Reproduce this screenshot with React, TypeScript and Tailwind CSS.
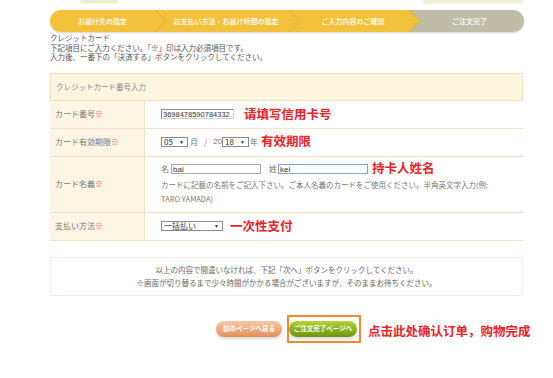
const jp = "font-['Noto_Sans_CJK_JP','Liberation_Sans',sans-serif]";
const cn = "font-['Noto_Sans_CJK_SC','Liberation_Sans',sans-serif]";

const steps = [
  { label: "お届け先の指定", w: "w-[105px]", bg: "bg-[#f3c23d]", fill: "#f3c23d", z: "z-30" },
  { label: "お支払い方法・お届け時間の指定", w: "w-[134px]", bg: "bg-[#f3c23d]", fill: "#f3c23d", z: "z-20" },
  { label: "ご入力内容のご確認", w: "w-[120px]", bg: "bg-[#f3c23d]", fill: "#f3c23d", z: "z-10" },
  { label: "ご注文完了", w: "flex-1", bg: "bg-[#c0bda6]", fill: "", z: "z-0" },
];

const Req = () => <span className="text-[#ef5a5a]">※</span>;

const Note = ({ children }: { children: React.ReactNode }) => (
  <span className={`${cn} text-[12.5px] font-bold text-[#e8232a] leading-none`}>{children}</span>
);

const FakeSelect = ({ value, w }: { value: string; w: string }) => (
  <span
    className={`${w} h-[10px] border border-[#8a8a8a] bg-white flex items-center justify-between pl-[2px] pr-[3px] text-[8px] text-[#333] leading-none font-['Liberation_Sans',sans-serif]`}
  >
    <span className={jp}>{value}</span>
    <span className="text-[5px]">▼</span>
  </span>
);

const StepBar = () => (
  <div className="ml-[50px] w-[474px] h-[22px] rounded-full overflow-hidden flex shadow-[0_1px_2px_rgba(0,0,0,0.18)]">
    {steps.map((s, i) => (
      <div key={i} className={`relative ${s.w} ${s.bg} ${s.z} flex items-center justify-center`}>
        <span className={`${jp} text-[7px] text-white font-medium leading-none ${i === 3 ? "pl-[6px]" : i > 0 ? "pl-[8px]" : ""}`}>
          {s.label}
        </span>
        {s.fill && (
          <svg className="absolute -right-[11px] top-0" width="11" height="22" viewBox="0 0 11 22">
            <polygon points="0,0 11,11 0,22" fill={s.fill} />
            <polyline points="0,0 11,11 0,22" fill="none" stroke="#dcaa2c" strokeWidth="1" />
          </svg>
        )}
      </div>
    ))}
  </div>
);

export default function App() {
  return (
    <div className={`w-[553px] h-[378px] bg-white overflow-hidden ${jp} text-[#666]`}>
      <div className="h-[10px] flex items-start">
        <div className="ml-[80px] w-[38px] h-[3px] rounded-full bg-[#e6eab8] blur-[1px]" />
        <div className="ml-[305px] w-[100px] h-[3px] rounded-full bg-[#eaedc6] blur-[1px]" />
      </div>

      <StepBar />

      <div className="ml-[50px] mt-[1px] text-[7.5px] leading-[9.5px] text-[#555]">
        <div>クレジットカード</div>
        <div>下記項目にご入力ください。「※」印は入力必須項目です。</div>
        <div>入力後、一番下の「決済する」ボタンをクリックしてください。</div>
      </div>

      <div className="ml-[50px] w-[473px] mt-[11px]">
        <div className="h-[28px] bg-[#fdf6df] border border-[#efdfbf] flex items-center pl-[5px] text-[7.5px] text-[#888]">
          クレジットカード番号入力
        </div>

        <div className="grid grid-cols-[95px_1fr] h-[28px] border-b border-[#f1e4ca]">
          <div className="bg-[#fdf6e3] border-r border-[#f1e2c4] flex items-center pl-[5px] text-[8px] text-[#777]">
            カード番号<Req />
          </div>
          <div className="flex items-center pl-[16px] gap-[10px]">
            <input
              readOnly
              value="3698478590784332"
              className="w-[73px] h-[10px] border border-[#8a8a8a] border-b-[#d0d0d0] border-r-[#d0d0d0] px-[1px] text-[7.5px] text-[#333] leading-none font-['Liberation_Sans',sans-serif] outline-none"
            />
            <Note>请填写信用卡号</Note>
          </div>
        </div>

        <div className="grid grid-cols-[95px_1fr] h-[28px] border-b border-[#f1e4ca]">
          <div className="bg-[#fdf6e3] border-r border-[#f1e2c4] flex items-center pl-[5px] text-[8px] text-[#777]">
            カード有効期限<Req />
          </div>
          <div className="flex items-center pl-[16px] text-[8px] text-[#777]">
            <FakeSelect value="05" w="w-[27px]" />
            <span className="ml-[2px]">月</span>
            <span className="ml-[6px]">/</span>
            <span className="ml-[6px] text-[8px] font-['Liberation_Sans',sans-serif]">20</span>
            <FakeSelect value="18" w="w-[27px]" />
            <span className="ml-[1px]">年</span>
            <span className="ml-[3px]">
              <Note>有效期限</Note>
            </span>
          </div>
        </div>

        <div className="grid grid-cols-[95px_1fr] h-[56px] border-b border-[#f1e4ca]">
          <div className="bg-[#fdf6e3] border-r border-[#f1e2c4] flex items-center pl-[5px] text-[8px] text-[#777]">
            カード名義<Req />
          </div>
          <div className="flex flex-col pl-[16px] pt-[7px] text-[8px] text-[#777]">
            <div className="flex items-center h-[11px]">
              <span>名</span>
              <input
                readOnly
                value="bai"
                className="ml-[2px] w-[90px] h-[10px] border border-[#a8a8a8] px-[1px] text-[8px] text-[#333] leading-none font-['Liberation_Sans',sans-serif] outline-none"
              />
              <span className="ml-[8px]">姓</span>
              <input
                readOnly
                value="kei"
                className="ml-[1px] w-[90px] h-[10px] border border-[#7da3de] px-[1px] text-[8px] text-[#333] leading-none font-['Liberation_Sans',sans-serif] outline-none"
              />
              <span className="ml-[4px]">
                <Note>持卡人姓名</Note>
              </span>
            </div>
            <div className="mt-[3px] leading-[14px] text-[7.5px] pr-[10px]">
              カードに記載の名前をご記入下さい。ご本人名義のカードをご使用ください。半角英文字入力(例:
              <br />
              TARO YAMADA)
            </div>
          </div>
        </div>

        <div className="grid grid-cols-[95px_1fr] h-[28px] border-b border-[#f1e4ca]">
          <div className="bg-[#fdf6e3] border-r border-[#f1e2c4] flex items-center pl-[5px] text-[8px] text-[#777]">
            支払い方法<Req />
          </div>
          <div className="flex items-center pl-[16px] gap-[7px]">
            <FakeSelect value="一括払い" w="w-[62px]" />
            <Note>一次性支付</Note>
          </div>
        </div>

        <div className="mt-[16px] h-[39px] border border-[#f4ede2] flex flex-col items-center justify-center text-[7.5px] leading-[13px] text-[#666]">
          <div>以上の内容で間違いなければ、下記「次へ」ボタンをクリックしてください。</div>
          <div>※画面が切り替るまで少々時間がかかる場合がございますが、そのままお待ちください。</div>
        </div>
      </div>

      <div className="mt-[19px] ml-[216px] flex items-center">
        <div className="w-[66px] h-[16px] rounded-full bg-gradient-to-b from-[#f6c9a4] to-[#e58f58] flex items-center justify-center text-[6.5px] font-bold text-white shadow-[0_2px_3px_rgba(0,0,0,0.15)]">
          前のページへ戻る
        </div>
        <div className="ml-[5px] w-[74px] h-[28px] border-2 border-[#f6892c] flex items-center pr-[2px]">
          <div className="w-[68px] h-[16px] rounded-full bg-gradient-to-b from-[#b5d334] to-[#6a9510] flex items-center justify-center text-[6.5px] font-bold text-white shadow-[0_2px_3px_rgba(0,0,0,0.15)]">
            ご注文完了ページへ
          </div>
        </div>
        <span className="ml-[7px]">
          <span className={`${cn} text-[12.5px] font-bold text-[#e8232a] leading-none`}>点击此处确认订单，购物完成</span>
        </span>
      </div>
    </div>
  );
}
